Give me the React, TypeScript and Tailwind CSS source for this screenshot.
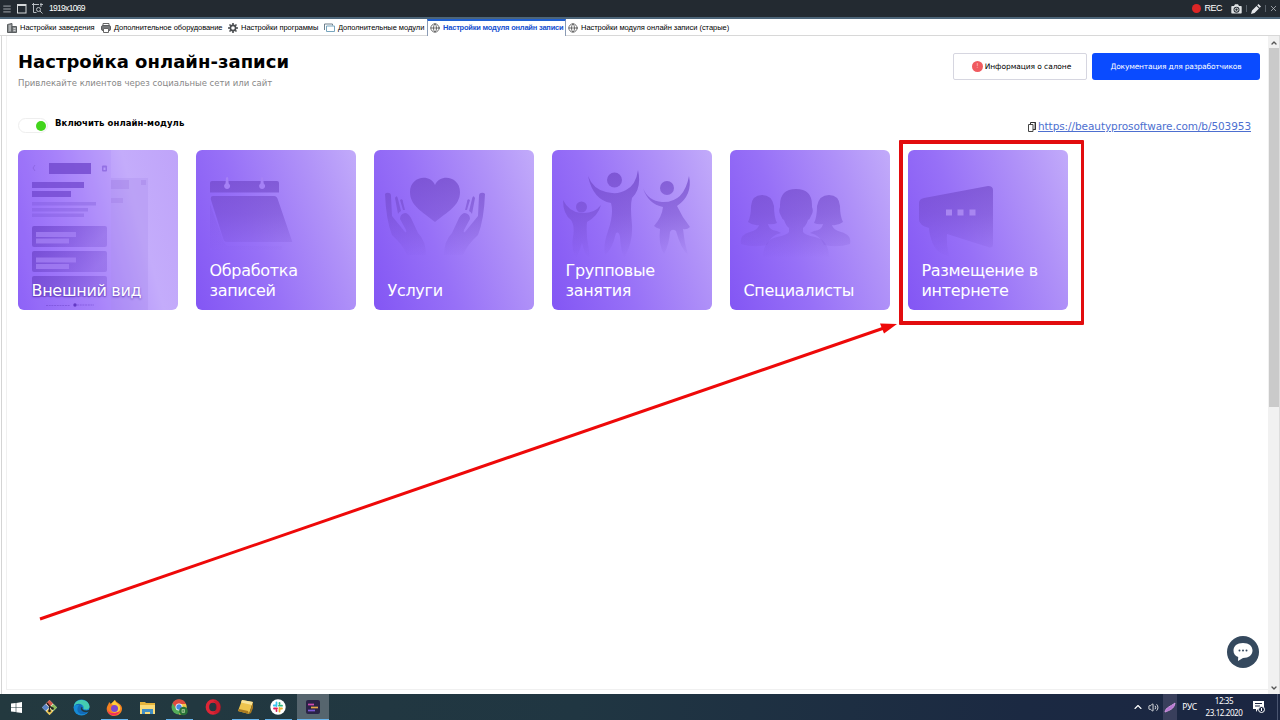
import type { ReactNode } from 'react';
import { Globe, Menu, X, ChevronUp, ChevronDown, Volume2 } from 'lucide-react';

function Tab({ icon, children, active, width }: { icon: ReactNode; children: ReactNode; active?: boolean; width: string }) {
  return (
    <div
      className={
        active
          ? `flex h-[17px] shrink-0 items-center gap-[3px] border-x border-t-2 border-x-[#8a9bb5] border-t-[#1f5fd0] bg-white pb-[2px] pl-[2px] font-bold text-[#1550d0] tracking-[-0.21px] ${width}`
          : `flex h-[17px] shrink-0 items-center gap-[3px] border-b border-[#d8d8d8] pt-px tracking-[-0.04px] ${width}`
      }
    >
      {icon}
      <span className="whitespace-nowrap">{children}</span>
    </div>
  );
}

function TopBar() {
  return (
    <header className="flex h-[19px] shrink-0 items-center border-b-2 border-[#4c6579] bg-[#232a31] pl-[2px] text-white">
      <Menu size={10} strokeWidth={2} className="text-[#b9bec3]" />
      <svg width="10" height="10" viewBox="0 0 10 10" className="ml-[5px]" fill="none" stroke="#d5d8da">
        <rect x=".5" y=".5" width="8.5" height="8.5" />
        <path d="M0 1h9" strokeWidth="2" />
      </svg>
      <svg width="11" height="11" viewBox="0 0 11 11" className="ml-[5px]" fill="none" stroke="#b9bec3">
        <path d="M0 1.500h7M1.500 0v9.500h3M9 0v4M8 1.500h3" />
        <circle cx="6.500" cy="6.500" r="2" />
        <path d="M8 8l2.500 2.500" />
      </svg>
      <span className="ml-[6px] font-['Liberation_Sans',sans-serif] text-[8.500px] tracking-[-0.7px]">1919x1069</span>
      <div className="ml-auto flex items-center pr-[2px]">
        <span className="h-[9px] w-[9px] rounded-full bg-[#dc2626]" />
        <span className="ml-[3px] font-['Liberation_Sans',sans-serif] text-[9px] tracking-[-0.5px]">REC</span>
        <svg width="11" height="10" viewBox="0 0 11 10" className="ml-[9px]">
          <path fillRule="evenodd" fill="#dfe2e4" d="M1 2h2l1-1.700h3L8 2h2q.700 0 .700.800v6q0 .700-.700.700H1q-.700 0-.700-.700v-6Q.300 2 1 2zM5.500 2.700a3 3 0 1 0 0 6 3 3 0 0 0 0-6z" />
          <circle cx="5.500" cy="5.700" r="1.600" fill="none" stroke="#dfe2e4" />
        </svg>
        <span className="ml-[4px] h-[7px] w-px bg-[#59616a]" />
        <svg width="10" height="10" viewBox="0 0 10 10" className="ml-[4px]" fill="#e5e7eb">
          <path d="M0 10l1-3.500L5.500 2 8 4.500 3.500 9zM6.200 1.300L7.500 0 10 2.500 8.700 3.800z" />
        </svg>
        <span className="ml-[4px] h-[7px] w-px bg-[#59616a]" />
        <X size={9} strokeWidth={2} className="ml-[3px] text-[#b9bec3]" />
      </div>
    </header>
  );
}

function Tabs() {
  return (
    <nav className="flex h-[17px] shrink-0 bg-white font-['Liberation_Sans',sans-serif] text-[7.500px] text-black">
      <div className="w-[7px] border-b border-[#d8d8d8]" />
      <Tab
        width="w-[94px]"
        icon={
          <svg width="10" height="10" viewBox="0 0 10 10">
            <path d="M.5 9.500V1.500L5 .5v9zM5 3.500h4.500v6H5z" fill="#8b8f91" stroke="#5a5e60" />
            <path d="M2 3h2M2 5h2M2 7h2M6.500 5.500h2M6.500 7.500h2" stroke="#dfe1e2" strokeWidth=".8" />
          </svg>
        }
      >
        Настройки заведения
      </Tab>
      <Tab
        width="w-[127px]"
        icon={
          <svg width="10" height="10" viewBox="0 0 10 10">
            <path d="M2 2.500V.5h6v2" fill="#fff" stroke="#666" />
            <rect x=".5" y="2.500" width="9" height="5" rx="1.500" fill="#77797b" stroke="#5b5d5f" />
            <path d="M2.500 5.500h5v4h-5z" fill="#fff" stroke="#666" />
          </svg>
        }
      >
        Дополнительное оборудование
      </Tab>
      <Tab
        width="w-[96px]"
        icon={
          <svg width="10" height="10" viewBox="0 0 10 10" fill="none" stroke="#4a4d50">
            <circle cx="5" cy="5" r="2.600" strokeWidth="1.600" />
            <path d="M5 0v2M5 8v2M0 5h2M8 5h2M1.500 1.500l1.300 1.300M7.200 7.200l1.300 1.300M8.500 1.500L7.200 2.800M2.800 7.200L1.500 8.500" strokeWidth="1.600" />
          </svg>
        }
      >
        Настройки программы
      </Tab>
      <Tab
        width="w-[103px]"
        icon={
          <svg width="11" height="10" viewBox="0 0 11 10" fill="none" stroke="#6e7f8b">
            <path d="M.5 7V1h8v1.500" />
            <path d="M2.500 3h8v5.500h-8z" fill="#fff" stroke="#77a5bd" />
          </svg>
        }
      >
        Дополнительные модули
      </Tab>
      <Tab active width="w-[139px]" icon={<Globe size={10} strokeWidth={2} className="text-[#555]" />}>Настройки модуля онлайн записи</Tab>
      <Tab width="w-[180px]" icon={<Globe size={10} strokeWidth={2} className="ml-[2px] text-[#555]" />}>Настройки модуля онлайн записи (старые)</Tab>
      <div className="flex-1 border-b border-[#d8d8d8]" />
    </nav>
  );
}

function Card({ children, art, light }: { children: ReactNode; art: ReactNode; light?: boolean }) {
  return (
    <div
      className={`relative flex h-[160px] w-[160px] shrink-0 items-end overflow-hidden rounded-[6px] ${
        light
          ? 'bg-[linear-gradient(75deg,#8c60f8_0%,#a883fb_38%,#c4acfb_72%,#bfa4f9_100%)]'
          : 'bg-[linear-gradient(70deg,#8356f4_0%,#9770f7_38%,#b092f8_75%,#c2abfa_100%)]'
      }`}
    >
      <svg width="160" height="160" viewBox="0 0 160 160" className="absolute inset-0">{art}</svg>
      <div className="relative pb-[10px] pl-[13.500px] text-[16px] leading-[19.500px] tracking-[-0.3px] text-white">{children}</div>
    </div>
  );
}

const fade = 'url(#fade)';

const previewArt = (
  <>
    <path d="M93 28h37v132H93z" fill="#9d7be8" opacity=".2" />
    <path d="M93 30h18v9H93zM93 48h12v5H93zM123 30h5v5h-5z" fill="#8a66d8" opacity=".2" />
    <path d="M0 0h93v160H0z" fill="#9c73fa" opacity=".12" />
    <path d="M17 15l-2 3 2 3" fill="none" stroke="#7d57d0" opacity=".5" />
    <path d="M31 13h42v11H31z" fill="#7047cd" opacity=".8" />
    <rect x="84" y="15.500" width="5" height="6" rx="1" fill="#7047cd" opacity=".5" />
    <rect x="85.500" y="17.500" width="2" height="2.500" fill="#b79afa" />
    <path d="M14 32h52v6H14zM14 41h39v6H14z" fill="#7047cd" opacity=".75" />
    <path d="M14 52h64v3.500H14zM14 58h56v3.500H14zM14 63.500h52v3.500H14z" fill="#7550cf" opacity=".3" />
    <g fill="url(#block)">
      <rect x="14" y="76" width="75" height="21" rx="2" />
      <rect x="14" y="101" width="75" height="21" rx="2" />
      <rect x="14" y="126" width="75" height="21" rx="2" />
    </g>
    <path d="M18 82h40v5H18zM18 88.500h33v5H18zM18 107.500h40v5H18zM18 114h33v5H18z" fill="#a582f5" opacity=".75" />
    <path d="M28 155.500h24M59 155h17" stroke="#7047cd" opacity=".55" strokeDasharray="2 .7" />
    <circle cx="57" cy="155" r="1.700" fill="#6439c5" />
  </>
);

const calendarArt = (
  <>
    <g fill={fade}>
      <path d="M16 31h65q2 0 2 2v9.500H14V33q0-2 2-2z" />
      <path d="M17 46h61q3 0 4 4l14 41q1 1-2 1H31q-3 0-4-4L15 50q-1-4 2-4z" />
      <path d="M14 54l13 36q1 4 5 6h54v4H18q-4 0-4-4z" opacity=".3" />
    </g>
    <path d="M30 28q1.200-2 2.200 0l.5 5.500a3 3 0 1 1-3.200 0zM65 28q1.200-2 2.200 0l.5 5.500a3 3 0 1 1-3.200 0z" fill="#a581f6" />
  </>
);

const hand = (
  <>
    <path d="M12 43q5-1 5 3l1 20 13 16q2 1 1-2l-6-11q0-5 5-6 3 0 6 5l7 15q8 8 8 22H33q-4-10-15-20-6-15-7-41z" />
    <path d="M21 48q2-4 3 1l3 12q-2 1-3 3zM26 50q3-2 3 2l2 8h-2z" />
  </>
);

const handsArt = (
  <g fill={fade}>
    <path d="M61 72C49 62 36 56 36 42c0-16 20-19 25-7 5-12 25-9 25 7 0 14-13 20-25 30z" />
    <g>{hand}</g>
    <g transform="translate(122 0) scale(-1 1)">{hand}</g>
  </g>
);

const peopleArt = (
  <g fill={fade}>
    <circle cx="62.500" cy="30" r="7.500" />
    <path d="M36 26q5 13 18 16 12 3 20-2 10-5 12-20 4 18-6 28-2 8 0 27 1 18-8 33-3-7-4-21-1-6-4-4-4 17-11 22-2-10 3-24 6-17 3-28Q41 50 36 26z" />
    <circle cx="29.500" cy="57" r="5.500" />
    <path d="M11 50q6 12 18 13 13 1 20-8-3 11-14 17-1 12 1 22l2 14q-5-2-8-15-3 10-6 15-5-8-3-21 2-11-2-17-8-6-8-20z" />
    <circle cx="115" cy="38" r="7" />
    <path d="M91 38q5 13 19 14 22 1 27-26 4 19-12 30 5 11 13 21-3 3-7 2 1 13 5 26-7-6-12-24-4-3-6 1-1 13-6 22-6-10-4-25-4-1-6-3 8-9 9-19-15-3-20-19z" />
  </g>
);

const sideHead = (
  <path d="M32 45q10 0 12 11 0 11 3 17-4 2-9 1 1 6 9 7l4 2q-10 2-14 12-14 3-26-1-2-9 9-12 8-2 9-7-6 1-11-3 3-6 3-16 1-11 11-11z" />
);

const teamArt = (
  <g fill={fade}>
    <g>{sideHead}</g>
    <g transform="translate(131 0) scale(-1 1)">{sideHead}</g>
    <path d="M50 55q0-16 16-16t16 16v2q2 5-1 9-1 3-3 4-2 6-5 8v4q2 3 12 5 14 3 14 21H33q0-18 14-21 10-2 12-5v-4q-3-2-5-8-2-1-3-4-3-4-1-9z" />
  </g>
);

const hornArt = (
  <>
    <path fill={fade} d="M11 53q0-4 5-5l64-12q5 0 5 4v54q0 5-5 3L39 84q-1 8 2 22-15-2-19-21-1-4-1-7-10-3-10-8z" />
    <path d="M38 59.500h6v6h-6zM49.500 59.500h6v6h-6zM61.500 59.500h6v6h-6z" fill="#a886f1" />
  </>
);

function Cards() {
  return (
    <section className="flex">
      <div className="flex gap-[18px]">
        <Card light art={previewArt}><span className="[text-shadow:0_1px_2px_#5b36b8]">Внешний вид</span></Card>
        <Card art={calendarArt}>Обработка<br />записей</Card>
        <Card art={handsArt}>Услуги</Card>
        <Card art={peopleArt}>Групповые<br />занятия</Card>
        <Card art={teamArt}>Специалисты</Card>
      </div>
      <div className="-mt-[10px] ml-[9px] h-[185px] w-[185px] rounded-[1px] border-4 border-r-[3px] border-[#e20c0e] pl-[5px] pt-[6px]">
        <Card art={hornArt}>Размещение в<br />интернете</Card>
      </div>
    </section>
  );
}

function TaskItem({ children, open, active }: { children: ReactNode; open?: boolean; active?: boolean }) {
  return (
    <div className={`flex h-full items-center justify-center border-b-[1.500px] pt-px ${active ? 'w-[32px] bg-[#56656e]' : 'w-[27px]'} ${open || active ? 'border-[#67b5ee]' : 'border-transparent'}`}>
      {children}
    </div>
  );
}

function Taskbar() {
  return (
    <footer className="flex h-[26px] shrink-0 items-center bg-[linear-gradient(90deg,#23393f_0%,#203642_45%,#1b2942_80%,#1b2642_100%)] font-['Noto_Sans',sans-serif] text-[8px] text-white">
      <div className="flex h-full items-center gap-[5.700px] pl-[3px]">
        <TaskItem><svg width="11" height="11" viewBox="0 0 11 11" fill="#fff"><path d="M0 1.600L4.700 1v4.200H0zM5.300.9L11 0v5.200H5.300zM0 5.800h4.700V10L0 9.400zM5.300 5.800H11V11l-5.700-.8z" /></svg></TaskItem>
        <TaskItem>
          <svg width="17" height="17" viewBox="0 0 17 17">
            <path d="M8.500 1L16 8.500 8.500 16 1 8.500z" fill="#e9ece5" />
            <path d="M8.500 1L12 4.500 8.500 8 5 4.500z" fill="#d45b4c" /><path d="M1 8.500L4.500 5 8 8.500 4.500 12z" fill="#5b83c4" /><path d="M16 8.500L12.500 5 9 8.500l3.500 3.500z" fill="#8dba5a" /><path d="M8.500 16L12 12.500 8.500 9 5 12.500z" fill="#e5c14d" />
            <path d="M6 4l2.500 3v5M8.500 7l3 2.500" stroke="#222" fill="none" strokeWidth="1.300" />
            <circle cx="8.500" cy="12" r="1.300" fill="#222" /><circle cx="11.500" cy="9.500" r="1.300" fill="#222" />
          </svg>
        </TaskItem>
        <TaskItem>
          <svg width="17" height="17" viewBox="0 0 17 17">
            <circle cx="8.500" cy="8.500" r="8" fill="#168bd6" />
            <path d="M1 7c1-8 14-8 15.500 0 .5 4-4.500 4-6 2.500C12 6 6 3 1 7z" fill="#45ccb1" />
            <path d="M1 7c4-4 9-2 8.500 1.500-2 3 1 5 6 3-3 6-12 4-11-2 .5-3 2-3 2-3S3 5 1 7z" fill="#146bb8" />
            <path d="M9.500 8c-1 3 3 4.500 7.500 2.500l-1 2c-5 2-9-1-8-4z" fill="#203943" />
          </svg>
        </TaskItem>
        <TaskItem open>
          <svg width="17" height="17" viewBox="0 0 17 17">
            <path d="M3 3l2 2 4-4c1 3 6 3 7 8 .5 5-4 8-8 8S-.5 13 1 8c.5-2 2-3 2-5z" fill="#f58220" />
            <path d="M9 1c0 4 7 4 5 10-2 4-8 3-9 0 2 1 5 0 5-2 0-3-3-3-5-4l4-4z" fill="#ffcd3b" />
            <circle cx="8.500" cy="9.500" r="3.500" fill="#7b48cf" /><path d="M1 8c0 6 6 8 13 4-3 7-13 6-13-4z" fill="#f5315d" />
          </svg>
        </TaskItem>
        <TaskItem>
          <svg width="15" height="13" viewBox="0 0 15 13"><path d="M0 1h5l1 1h9v10H0z" fill="#e6b43b" /><path d="M0 4h15v9H0z" fill="#fbdc79" /><path d="M2 8h11v5h-3v-2H5v2H2z" fill="#428fc5" /></svg>
        </TaskItem>
        <TaskItem open>
          <svg width="17" height="17" viewBox="0 0 17 17">
            <circle cx="8" cy="8" r="7.500" fill="#54ad58" /><path d="M1.500 4.200A7.500 7.500 0 0 1 15 5H8l-3 4z" fill="#df4b3f" /><path d="M15 5a7.500 7.500 0 0 1-7 10.500L11 9 8 5z" fill="#efc546" />
            <circle cx="8" cy="8" r="3.500" fill="#fff" /><circle cx="8" cy="8" r="2.700" fill="#4788e5" /><circle cx="12.500" cy="12" r="4.300" fill="#287338" /><path d="M11 10.500h2.500v3H11zM13.500 12H11" fill="none" stroke="#a8ce9d" strokeWidth=".8" />
          </svg>
        </TaskItem>
        <TaskItem><svg width="16" height="16" viewBox="0 0 16 16"><ellipse cx="8" cy="8" rx="5.600" ry="6" fill="none" stroke="#df2636" strokeWidth="3.500" /><path d="M8 2.500c4 0 4 11 0 11 6 4 9-2 7.500-8C14 1 10 .5 8 2.500z" fill="#b91527" opacity=".6" /></svg></TaskItem>
        <TaskItem open><svg width="17" height="16" viewBox="0 0 17 16"><path d="M5 1l11 2-4 12L1 12z" fill="#eec54e" /><path d="M5 1l11 2-1 3L4 3.500z" fill="#f9e49a" /><path d="M2 10l9 2 1 3-11-3zM12 15l4-12v6l-2 5z" fill="#a97920" /></svg></TaskItem>
        <TaskItem open>
          <svg width="16" height="16" viewBox="0 0 16 16"><circle cx="8" cy="8" r="7.700" fill="#fff" /><g strokeWidth="1.800" strokeLinecap="round"><path d="M6.500 3.500v3.500M3.800 6.500h2" stroke="#36c5f0" /><path d="M12 6.700H9M9.500 3.800v1" stroke="#2eb67d" /><path d="M9.500 12.500V9M12 9.500h-1" stroke="#ecb22e" /><path d="M4 9.500h3M6.500 12v-.5" stroke="#e01e5a" /></g></svg>
        </TaskItem>
        <TaskItem active>
          <svg width="14" height="14" viewBox="0 0 14 14"><rect width="14" height="14" rx="2" fill="#2a2346" /><g strokeWidth="1.700"><path d="M2 4.500h6" stroke="#d14ab0" /><path d="M5 7.500h7" stroke="#e7a848" /><path d="M2 10.500h7" stroke="#7d58d6" /></g></svg>
        </TaskItem>
      </div>
      <div className="ml-auto flex h-full items-center">
        <ChevronUp size={12} strokeWidth={2.200} />
        <Volume2 size={11} strokeWidth={1.800} className="ml-[4px]" />
        <div className="ml-[4px] flex h-full w-[14px] items-center justify-center bg-[#393f5c]">
          <svg width="12" height="11" viewBox="0 0 12 11"><path d="M1 10C2 5 6 5 11 1 10 7 6 8 1 10z" fill="#b777d3" stroke="#d196e2" /></svg>
        </div>
        <span className="ml-[5px] text-[8.500px] tracking-[-0.15px]">РУС</span>
        <div className="ml-[8px] w-[38px] whitespace-nowrap text-center leading-[12px] tracking-[-0.4px]">12:35<br />23.12.2020</div>
        <svg width="12" height="12" viewBox="0 0 12 12" className="ml-[10px]"><path d="M0 0h11v8H5l-2 3V8H0z" fill="#fff" /><path d="M2 2.500h7M2 5h5" stroke="#1b2642" /><circle cx="8.500" cy="8.500" r="3" fill="#1b2642" stroke="#fff" /><path d="M8.500 7v3" stroke="#fff" /></svg>
        <div className="ml-[12px] mr-[2px] h-full w-px bg-[#4a5570]" />
      </div>
    </footer>
  );
}

export default function App() {
  return (
    <div className="relative flex h-[720px] w-[1280px] flex-col overflow-hidden bg-white font-['DejaVu_Sans',sans-serif] text-black">
      <svg width="0" height="0" className="absolute">
        <defs>
          <linearGradient id="fade" gradientUnits="userSpaceOnUse" x1="0" y1="20" x2="0" y2="108">
            <stop offset="0" stopColor="#7148c8" stopOpacity=".75" />
            <stop offset=".5" stopColor="#7148c8" stopOpacity=".48" />
            <stop offset="1" stopColor="#7148c8" stopOpacity="0" />
          </linearGradient>
          <linearGradient id="block" x1="0" y1="0" x2="1" y2=".3">
            <stop offset="0" stopColor="#7047cd" stopOpacity=".8" />
            <stop offset="1" stopColor="#7047cd" stopOpacity=".3" />
          </linearGradient>
        </defs>
      </svg>
      <TopBar />
      <Tabs />
      <div className="flex h-[658px] shrink-0">
        <div className="ml-[1px] flex flex-1 border-l border-[#d4d4d4] pb-[4px] pl-[4px]">
          <main className="flex flex-1 flex-col border-b border-l border-[#f0f0f0] pl-[11px]">
            <div className="flex h-[80px] items-start pr-[8px]">
              <div>
                <h1 className="mt-[14px] whitespace-nowrap text-[18px] font-bold leading-[24px] tracking-[0.03px]">Настройка онлайн-записи</h1>
                <p className="mt-[3px] whitespace-nowrap text-[8.500px] leading-[12px] text-[#888]">Привлекайте клиентов через социальные сети или сайт</p>
              </div>
              <div className="ml-auto mt-[17px] flex gap-[5px] text-[7.500px]">
                <button className="flex h-[27px] w-[134px] items-center justify-center gap-[2px] rounded-[2px] border border-[#d6d6e0] bg-white pl-[3px] tracking-[-0.08px]">
                  <span className="flex h-[11px] w-[11px] items-center justify-center rounded-full bg-[#f05b60] text-[7px] text-[#ffc1c1]">!</span>
                  <span className="whitespace-nowrap">Информация о салоне</span>
                </button>
                <button className="h-[27px] w-[168px] whitespace-nowrap rounded-[3px] bg-[#0a4bff] text-[7.500px] tracking-[-0.18px] text-white">Документация для разработчиков</button>
              </div>
            </div>
            <div className="flex h-[34px] items-start pr-[17px]">
              <div className="mt-[2px] flex h-[15px] w-[30px] items-center justify-end rounded-full border border-[#eeeeee] pr-px">
                <span className="h-[10px] w-[10px] rounded-full bg-[#42d51b]" />
              </div>
              <span className="ml-[7px] mt-px whitespace-nowrap text-[8.500px] font-bold leading-[13px] tracking-[0.08px]">Включить онлайн-модуль</span>
              <div className="ml-auto flex items-center">
                <svg width="8" height="10" viewBox="0 0 8 10" className="mr-[2px]">
                  <path d="M2.500.5h5v7h-5z" fill="#fff" stroke="#333" />
                  <path d="M7.300.5v7" stroke="#333" strokeWidth="1.400" />
                  <path d="M.5 2.500h4.500v7H.5z" fill="#fff" stroke="#444" />
                </svg>
                <a className="whitespace-nowrap text-[10.500px] leading-[21px] tracking-[-0.08px] text-[#4d6fd0] underline">https://beautyprosoftware.com/b/503953</a>
              </div>
            </div>
            <Cards />
          </main>
        </div>
        <aside className="flex w-[12px] flex-col items-center border-r border-[#ddd] bg-[#f1f1f1]">
          <ChevronUp size={8} strokeWidth={4} className="mb-px mt-[3px] shrink-0 text-[#555]" />
          <div className="h-[359px] w-[10px] bg-[#cacaca]" />
          <ChevronDown size={8} strokeWidth={4} className="mb-[2px] mt-auto shrink-0 text-[#555]" />
        </aside>
      </div>
      <Taskbar />
      <svg width="1280" height="720" viewBox="0 0 1280 720" className="pointer-events-none absolute inset-0">
        <path d="M40 619L884 328" stroke="#ee0909" strokeWidth="3" />
        <path d="M897 324L880 323.500l4 10z" fill="#ee0909" />
      </svg>
      <button className="absolute left-[1227px] top-[636px] flex h-[32px] w-[32px] items-center justify-center rounded-full bg-[#35495e]">
        <svg width="20" height="18" viewBox="0 0 20 18"><path d="M10 0c6 0 9.500 3 9.500 7.500S16 15 10 15l-5 3 .2-4C2 13 .5 10.500.5 7.500.5 3 4 0 10 0z" fill="#fff" /><g fill="#35495e"><circle cx="6.500" cy="7.500" r="1" /><circle cx="10" cy="7.500" r="1" /><circle cx="13.500" cy="7.500" r="1" /></g></svg>
      </button>
    </div>
  );
}
